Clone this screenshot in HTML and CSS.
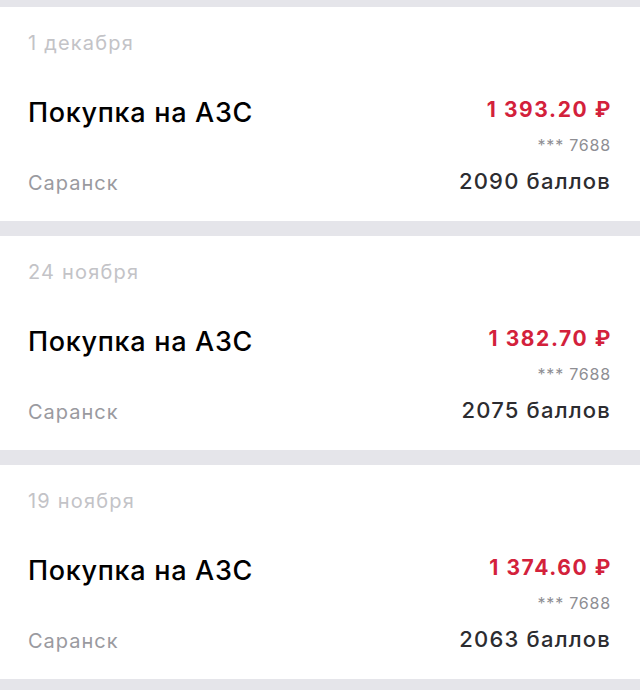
FILE: index.html
```html
<!DOCTYPE html>
<html>
    <head>
        <title>Операции</title>
        <meta charset="UTF-8">
        <link rel="stylesheet" href="styles.css">
    </head>
    <body>
        <div class='feed'>
            <div class='card'>
                <div class='date'>1 декабря</div>
                <div class='op'>
                    <div class='title'>Покупка на АЗС</div>
                    <div class='amount'>1 393.20 ₽</div>
                    <div class='pan'>*** 7688</div>
                    <div class='city'>Саранск</div>
                    <div class='points'>2090 баллов</div>
                </div>
            </div>

            <div class='card'>
                <div class='date'>24 ноября</div>
                <div class='op'>
                    <div class='title'>Покупка на АЗС</div>
                    <div class='amount'>1 382.70 ₽</div>
                    <div class='pan'>*** 7688</div>
                    <div class='city'>Саранск</div>
                    <div class='points'>2075 баллов</div>
                </div>
            </div>

            <div class='card'>
                <div class='date'>19 ноября</div>
                <div class='op'>
                    <div class='title'>Покупка на АЗС</div>
                    <div class='amount'>1 374.60 ₽</div>
                    <div class='pan'>*** 7688</div>
                    <div class='city'>Саранск</div>
                    <div class='points'>2063 баллов</div>
                </div>
            </div>
        </div>
    </body>
</html>
```

FILE: styles.css
```css
body {
    margin: 0;
    background: #e5e5ea;
    font-family: "Inter", "Roboto", sans-serif;
}
.feed {
    display: flex;
    flex-direction: column;
    gap: 15px;
    padding-top: 7px;
}
.card {
    background: #ffffff;
    height: 214px;
    box-sizing: border-box;
    padding: 25px 29px 0 28px;
}
.date {
    font-size: 20px;
    line-height: 22px;
    letter-spacing: 1.2px;
    color: #c3c3c7;
}
.op {
    margin-top: 41px;
    display: grid;
    grid-template-columns: 1fr auto;
    grid-template-areas:
        "title amount"
        ". pan"
        "city points";
}
.title {
    grid-area: title;
    font-size: 27px;
    line-height: 30px;
    letter-spacing: 0.7px;
    font-weight: 500;
    color: #000000;
    padding-top: 3px;
}
.amount {
    grid-area: amount;
    text-align: right;
    font-size: 21px;
    line-height: 30px;
    letter-spacing: 1.6px;
    font-weight: 700;
    color: #d3213b;
    margin-right: -1px;
}
.pan {
    grid-area: pan;
    text-align: right;
    font-size: 16px;
    line-height: 20px;
    letter-spacing: 0.8px;
    color: #8e8e93;
    margin-top: 7px;
}
.city {
    grid-area: city;
    font-size: 20px;
    line-height: 26px;
    letter-spacing: 1px;
    color: #9a9a9f;
    margin-top: 15px;
}
.points {
    grid-area: points;
    text-align: right;
    font-size: 22px;
    line-height: 26px;
    letter-spacing: 1.2px;
    font-weight: 500;
    color: #2c2c30;
    margin-top: 13px;
}
```
